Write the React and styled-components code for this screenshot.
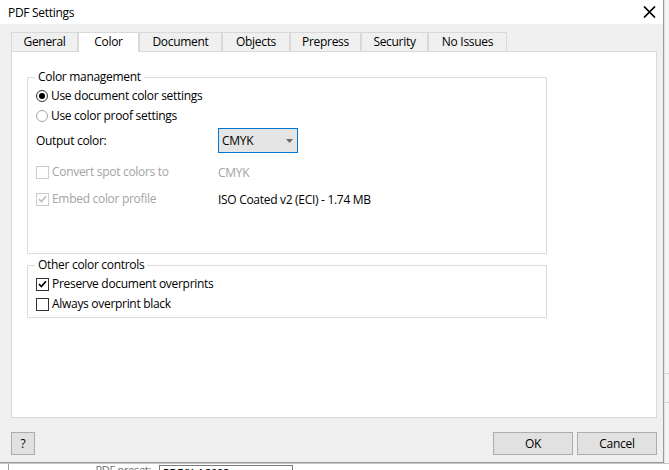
import React from "react";
import styled, { createGlobalStyle } from "styled-components";

const GlobalStyle = createGlobalStyle`
  html, body { margin: 0; padding: 0; background: #ffffff; }
  body {
    font-family: "Open Sans", "Noto Sans", sans-serif;
    font-size: 12px;
    letter-spacing: -0.3px;
    color: #000;
  }
  * { box-sizing: border-box; }
`;

const Desktop = styled.div`
  width: 669px;
  height: 470px;
  overflow: hidden;
  display: grid;
  grid-template-columns: 664px 5px;
  grid-template-rows: 463px 7px;
`;

const Dialog = styled.div`
  grid-column: 1;
  grid-row: 1;
  display: flex;
  flex-direction: column;
  border-right: 1px solid #9a9a9a;
  border-bottom: 1px solid #9a9a9a;
  background: #f0f0f0;
`;

const TitleBar = styled.div`
  height: 24px;
  flex: none;
  background: #ffffff;
  display: flex;
  align-items: center;
  justify-content: space-between;
  padding: 0 5px 0 8px;
`;

const Title = styled.span`
  line-height: 16px;
  margin-top: 1px;
`;

const CloseButton = styled.div`
  width: 18px;
  height: 18px;
  display: flex;
  align-items: center;
  justify-content: center;
  margin-top: -1px;
`;

const Body = styled.div`
  flex: 1;
  display: flex;
  flex-direction: column;
  padding: 8px 6px 0 11px;
`;

const TabRow = styled.div`
  display: flex;
  height: 19px;
  flex: none;
  position: relative;
  z-index: 1;
`;

const Tab = styled.div`
  width: ${(p) => p.$w}px;
  height: ${(p) => (p.$active ? 20 : 19)}px;
  border: 1px solid #d9d9d9;
  border-bottom: none;
  background: ${(p) => (p.$active ? "#ffffff" : "#f0f0f0")};
  display: flex;
  align-items: center;
  justify-content: center;
  line-height: 16px;
  padding-bottom: 1px;
`;

const Panel = styled.div`
  height: 367px;
  flex: none;
  background: #ffffff;
  border: 1px solid #d9d9d9;
  padding: 17px 0 0 15px;
  display: flex;
  flex-direction: column;
`;

const Group = styled.fieldset`
  width: 520px;
  margin: 0 0 ${(p) => p.$gap || 0}px 0;
  padding: 1px 0 ${(p) => p.$pb}px 8px;
  border: 1px solid #dcdcdc;
  min-width: 0;
`;

const Legend = styled.legend`
  margin-left: -1px;
  padding: 0 3px;
  line-height: 16px;
`;

const Row = styled.div`
  display: grid;
  grid-template-columns: 182px 1fr;
  align-items: center;
  height: ${(p) => p.$h || 20}px;
  margin-top: ${(p) => p.$mt || 0}px;
  color: ${(p) => (p.$disabled ? "#a3a3a3" : "#000")};
`;

const Option = styled.div`
  display: flex;
  align-items: center;
  gap: 3px;
  height: 20px;
  line-height: 16px;
  color: ${(p) => (p.$disabled ? "#a3a3a3" : "#000")};
`;

const RadioCircle = styled.span`
  width: 12px;
  height: 12px;
  border-radius: 50%;
  border: 1px solid ${(p) => (p.$checked ? "#333333" : "#a8a8a8")};
  background: #fff;
  display: flex;
  align-items: center;
  justify-content: center;
  flex: none;
  &::after {
    content: "";
    width: 6px;
    height: 6px;
    border-radius: 50%;
    background: ${(p) => (p.$checked ? "#000" : "transparent")};
  }
`;

const CheckBox = styled.span`
  width: 13px;
  height: 13px;
  border: 1px solid ${(p) => (p.$disabled ? "#cccccc" : "#333333")};
  background: #fff;
  display: flex;
  align-items: center;
  justify-content: center;
  flex: none;
`;

const Select = styled.div`
  width: 80px;
  height: 25px;
  border: 1px solid #0078d7;
  background: #e5e5e5;
  display: flex;
  align-items: center;
  justify-content: space-between;
  padding: 0 4px 0 3px;
  line-height: 16px;
`;

const Footer = styled.div`
  display: flex;
  justify-content: space-between;
  margin-top: 14px;
`;

const ButtonGroup = styled.div`
  display: flex;
  gap: 4px;
`;

const Button = styled.div`
  width: ${(p) => p.$w}px;
  height: 23px;
  border: 1px solid #adadad;
  background: #e1e1e1;
  display: flex;
  align-items: center;
  justify-content: center;
  line-height: 16px;
`;

const PeekStrip = styled.div`
  grid-column: 1 / span 2;
  grid-row: 2;
  background: #ffffff;
  display: flex;
  align-items: flex-start;
  overflow: hidden;
  border-top: 1px solid #c8c8c8;
`;

const PeekPane = styled.div`
  margin-left: 8px;
  border-left: 1px solid #a0a0a0;
  width: 285px;
  height: 100%;
  display: flex;
  justify-content: flex-end;
  align-items: flex-start;
  gap: 8px;
  color: #6d6d6d;
  line-height: 14px;
  font-size: 11px;
`;

const PeekLabel = styled.span`
  margin-top: -1px;
`;

const PeekBox = styled.div`
  width: 134px;
  height: 12px;
  border: 1px solid #7a7a7a;
  border-bottom: none;
  margin-top: 1px;
  padding-left: 3px;
  color: #000;
  line-height: 14px;
  overflow: hidden;
  font-weight: 600;
`;

const RightEdge = styled.div`
  grid-column: 2;
  grid-row: 1;
  background: #f4f4f4;
  border-left: 1px solid #e2e2e2;
  display: flex;
  flex-direction: column;
  justify-content: flex-end;
  padding-bottom: 60px;
`;

const EdgeLine = styled.div`
  height: 30px;
  border-top: 1px solid #cfcfcf;
  border-bottom: 1px solid #cfcfcf;
`;

const Check = ({ color }) => (
  <svg width="9" height="8" viewBox="0 0 9 8">
    <path d="M1 4.2 L3.4 6.6 L8 1.2" fill="none" stroke={color} strokeWidth="1.7" />
  </svg>
);

const tabs = [
  { label: "General", w: 67 },
  { label: "Color", w: 61, active: true },
  { label: "Document", w: 83 },
  { label: "Objects", w: 68 },
  { label: "Prepress", w: 71 },
  { label: "Security", w: 67 },
  { label: "No Issues", w: 79 },
];

export default function App() {
  return (
    <>
      <GlobalStyle />
      <Desktop>
        <Dialog>
          <TitleBar>
            <Title>PDF Settings</Title>
            <CloseButton>
              <svg width="13" height="12" viewBox="0 0 13 12">
                <path d="M1 0.5 L12 11.5 M12 0.5 L1 11.5" stroke="#000" strokeWidth="1.7" />
              </svg>
            </CloseButton>
          </TitleBar>
          <Body>
            <TabRow>
              {tabs.map((t) => (
                <Tab key={t.label} $w={t.w} $active={t.active}>
                  {t.label}
                </Tab>
              ))}
            </TabRow>
            <Panel>
              <Group $pb={44} $gap={3}>
                <Legend>Color management</Legend>
                <Option>
                  <RadioCircle $checked />
                  Use document color settings
                </Option>
                <Option>
                  <RadioCircle />
                  Use color proof settings
                </Option>
                <Row $h={25} $mt={2}>
                  <span>Output color:</span>
                  <Select>
                    <span>CMYK</span>
                    <svg width="7" height="4" viewBox="0 0 7 4">
                      <path d="M0 0 H7 L3.5 4 Z" fill="#6b6b6b" />
                    </svg>
                  </Select>
                </Row>
                <Row $mt={9} $disabled>
                  <Option $disabled>
                    <CheckBox $disabled />
                    Convert spot colors to
                  </Option>
                  <span>CMYK</span>
                </Row>
                <Row $mt={7}>
                  <Option $disabled>
                    <CheckBox $disabled>
                      <Check color="#bdbdbd" />
                    </CheckBox>
                    Embed color profile
                  </Option>
                  <span>ISO Coated v2 (ECI) - 1.74 MB</span>
                </Row>
              </Group>
              <Group $pb={3}>
                <Legend>Other color controls</Legend>
                <Option>
                  <CheckBox>
                    <Check color="#000" />
                  </CheckBox>
                  Preserve document overprints
                </Option>
                <Option>
                  <CheckBox />
                  Always overprint black
                </Option>
              </Group>
            </Panel>
            <Footer>
              <Button $w={24}>?</Button>
              <ButtonGroup>
                <Button $w={80}>OK</Button>
                <Button $w={80}>Cancel</Button>
              </ButtonGroup>
            </Footer>
          </Body>
        </Dialog>
        <RightEdge>
          <EdgeLine />
        </RightEdge>
        <PeekStrip>
          <PeekPane>
            <PeekLabel>PDF preset:</PeekLabel>
            <PeekBox>PDF/X-4 2008</PeekBox>
          </PeekPane>
        </PeekStrip>
      </Desktop>
    </>
  );
}
